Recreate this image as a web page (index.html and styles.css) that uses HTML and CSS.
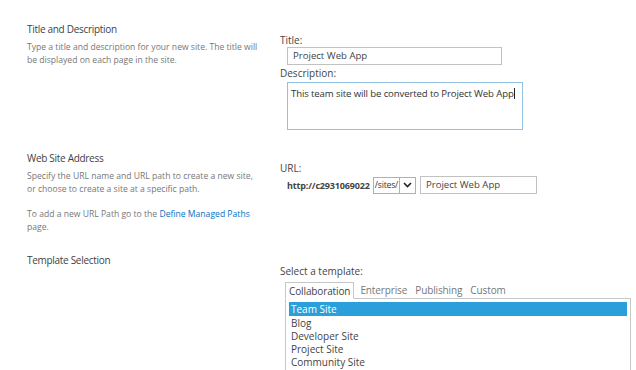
FILE: index.html
```html
<!DOCTYPE html>
<html>
<head>
<meta charset="utf-8">
<link rel="stylesheet" href="styles.css">
</head>
<body>
<div class="page">
  <section class="sec sec-title">
    <div class="info">
      <h3 class="head">Title and Description</h3>
      <p class="desc">Type a title and description for your new site. The title will be displayed on each page in the site.</p>
    </div>
    <div class="fields">
      <div class="label">Title:</div>
      <div class="input title-input">Project Web App</div>
      <div class="label">Description:</div>
      <div class="textarea">This team site will be converted to Project Web App<span class="caret"></span></div>
    </div>
  </section>

  <section class="sec sec-url">
    <div class="info">
      <h3 class="head">Web Site Address</h3>
      <p class="desc">Specify the URL name and URL path to create a new site, or choose to create a site at a specific path.</p>
      <p class="desc desc-gap">To add a new URL Path go to the <a class="link" href="#">Define Managed Paths</a> page.</p>
    </div>
    <div class="fields">
      <div class="label">URL:</div>
      <div class="url-row">
        <span class="prefix">http://c2931069022</span>
        <span class="select"><span class="select-text">/sites/</span><span class="select-btn"><svg width="9" height="6" viewBox="0 0 9 6"><path d="M1 1 L4.5 4.5 L8 1" fill="none" stroke="#222" stroke-width="1.6"/></svg></span></span>
        <span class="input url-input">Project Web App</span>
      </div>
    </div>
  </section>

  <section class="sec sec-tpl">
    <div class="info">
      <h3 class="head">Template Selection</h3>
    </div>
    <div class="fields">
      <div class="label">Select a template:</div>
      <div class="tabs">
        <span class="tab active">Collaboration</span>
        <span class="tab">Enterprise</span>
        <span class="tab">Publishing</span>
        <span class="tab">Custom</span>
      </div>
      <ul class="list">
        <li class="item selected">Team Site</li>
        <li class="item">Blog</li>
        <li class="item">Developer Site</li>
        <li class="item">Project Site</li>
        <li class="item">Community Site</li>
      </ul>
    </div>
  </section>
</div>
</body>
</html>
```

FILE: styles.css
```css
html, body {
  margin: 0;
  padding: 0;
  background: #ffffff;
  overflow: hidden;
}
body {
  width: 636px;
  height: 370px;
  font-family: "Open Sans", "Noto Sans", sans-serif;
  color: #444444;
}
.page {
  padding-left: 27px;
}
.sec {
  display: grid;
  grid-template-columns: 253px 1fr;
}
.sec-title {
  padding-top: 22px;
  height: 128px;
}
.sec-url {
  height: 102px;
  padding-top: 1px;
}
.sec-tpl {
  height: 117px;
}
.head {
  margin: 0;
  font-size: 10px;
  font-weight: normal;
  line-height: 14px;
  color: #3f3f3f;
  letter-spacing: -0.3px;
}
.desc {
  margin: 5px 0 0 0;
  font-size: 8.6px;
  line-height: 13px;
  color: #777777;
  width: 232px;
}
.desc-gap {
  margin-top: 12px;
}
.link {
  color: #0072c6;
  text-decoration: none;
}
.fields {
  font-size: 10px;
}
.label {
  line-height: 14px;
  font-size: 10px;
  color: #444444;
}
.sec-title .fields {
  padding-top: 11px;
}
.input {
  box-sizing: border-box;
  border: 1px solid #c2c2c2;
  background: #fff;
  font-size: 9.6px;
  line-height: 16px;
  padding-left: 5px;
  color: #444444;
}
.title-input {
  margin-left: 7px;
  width: 215px;
  height: 18px;
  margin-bottom: 1px;
}
.textarea {
  box-sizing: border-box;
  margin-left: 7px;
  margin-top: 2px;
  width: 236px;
  height: 48px;
  border: 1px solid #92c0e0;
  padding: 4px 3px;
  font-size: 9.6px;
  line-height: 13px;
  letter-spacing: -0.12px;
  color: #333333;
  white-space: nowrap;
}
.caret {
  display: inline-block;
  width: 1px;
  height: 11px;
  background: #222;
  vertical-align: -2px;
}
.sec-url .fields {
  padding-top: 10px;
}
.url-row {
  display: flex;
  align-items: center;
  height: 18px;
  margin-left: 7px;
  margin-top: 1px;
}
.prefix {
  font-weight: bold;
  font-size: 9px;
  letter-spacing: -0.15px;
  color: #444444;
  margin-right: 3px;
}
.select {
  display: flex;
  box-sizing: border-box;
  height: 17px;
  border: 1px solid #b0b0b0;
  align-items: stretch;
}
.select-text {
  font-size: 8.6px;
  line-height: 15px;
  letter-spacing: -0.2px;
  padding: 0 1px 0 1px;
  color: #333;
}
.select-btn {
  width: 15px;
  border-left: 1px solid #b0b0b0;
  display: flex;
  align-items: center;
  justify-content: center;
  background: #fff;
}
.url-input {
  margin-left: 4px;
  width: 117px;
  height: 18px;
}
.sec-tpl .fields {
  padding-top: 11px;
}
.tabs {
  display: flex;
  margin-top: 4px;
  margin-left: 5px;
  height: 17px;
  align-items: stretch;
  position: relative;
  z-index: 1;
}
.tab {
  font-size: 10px;
  line-height: 16px;
  color: #777777;
  padding: 0 4px;
  margin-right: 0;
  letter-spacing: -0.12px;
}
.tab.active {
  color: #444444;
  border: 1px solid #c6c6c6;
  border-bottom: 1px solid #ffffff;
  background: #fff;
  padding: 0 3px;
  margin-right: 2px;
}
.list {
  list-style: none;
  margin: -1px 0 0 5px;
  padding: 3px 3px;
  width: 346px;
  height: 82px;
  box-sizing: border-box;
  border: 1px solid #c6c6c6;
}
.item {
  font-size: 10px;
  line-height: 13px;
  color: #444444;
  padding-left: 2px;
}
.item.selected {
  background: #2b9fd9;
  color: #ffffff;
  line-height: 14px;
  margin-bottom: 1px;
}
```
